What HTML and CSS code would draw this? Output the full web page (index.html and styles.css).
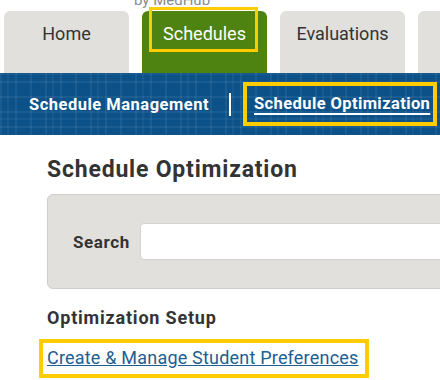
FILE: index.html
```html
<!DOCTYPE html>
<html lang="en">
<head>
    <meta charset="UTF-8">
    <meta name="viewport" content="width=device-width, initial-scale=1.0">
    <title>Schedule Optimization</title>
    <link rel="stylesheet" href="styles.css">
</head>
<body>

<div class="brand"><span class="brand-text">by MedHub</span></div>

<div class="tabs">
    <div class="tab">Home</div>
    <div class="tab tab-active"><span class="highlight">Schedules</span></div>
    <div class="tab">Evaluations</div>
    <div class="tab"></div>
</div>

<div class="subnav">
    <a class="subnav-link" href="#">Schedule Management</a>
    <span class="subnav-sep"></span>
    <span class="subnav-box"><a class="subnav-link subnav-current" href="#">Schedule Optimization</a></span>
</div>

<div class="content">
    <h1 class="page-title">Schedule Optimization</h1>

    <div class="search-panel">
        <label for="search" class="search-label">Search</label>
        <input type="text" id="search" class="search-input">
    </div>

    <h2 class="section-title">Optimization Setup</h2>

    <span class="link-box"><a class="setup-link" href="#">Create &amp; Manage Student Preferences</a></span>
</div>

</body>
</html>
```

FILE: styles.css
```css
body {
    margin: 0;
    padding: 0;
    font-family: Roboto, "Liberation Sans", Arial, sans-serif;
    background-color: #ffffff;
    color: #333333;
    overflow: hidden;
}

.brand {
    height: 11px;
    overflow: hidden;
    padding-left: 134px;
    font-size: 15px;
    line-height: 12px;
    color: #8a8a8a;
}

.brand-text {
    display: block;
    margin-top: -6px;
}

.tabs {
    display: flex;
    gap: 13px;
    padding-left: 4px;
    height: 62px;
}

.tab {
    flex: 0 0 125px;
    background-color: #e1e0dd;
    border-radius: 6px 6px 0 0;
    text-align: center;
    font-size: 18px;
    line-height: 24px;
    padding-top: 11px;
    color: #333333;
}

.tab-active {
    background-color: #4e8312;
    color: #ffffff;
}

.highlight {
    display: inline-block;
    padding: 12px 9px 3px 11px;
    margin: -12px -9px -3px -11px;
    outline: 3px solid #ffcc00;
}

/* blue sub navigation with square pattern */
.subnav {
    height: 62px;
    background-color: #0c5289;
    background-image:
        linear-gradient(rgba(255, 255, 255, 0.06) 2px, transparent 2px),
        linear-gradient(90deg, rgba(255, 255, 255, 0.06) 2px, transparent 2px),
        linear-gradient(rgba(255, 255, 255, 0.04) 2px, transparent 2px),
        linear-gradient(90deg, rgba(255, 255, 255, 0.04) 2px, transparent 2px);
    background-size: 15px 15px, 15px 15px, 45px 45px, 45px 45px;
    background-position: 0 8px, 0 8px, 7px 0, 7px 0;
    display: flex;
    align-items: center;
    padding-left: 29px;
    white-space: nowrap;
}

.subnav-link {
    flex-shrink: 0;
    color: #ffffff;
    font-weight: bold;
    font-size: 16.5px;
    letter-spacing: 0.5px;
    text-decoration: none;
}

.subnav-sep {
    flex-shrink: 0;
    width: 2px;
    height: 23px;
    background-color: #ffffff;
    margin: 0 12px 0 20px;
}

.subnav-box {
    flex-shrink: 0;
    border: 4px solid #ffcc00;
    padding: 8px 3px 9px 7px;
}

.subnav-current {
    letter-spacing: 0.4px;
    text-decoration: underline;
    text-decoration-thickness: 2px;
    text-underline-offset: 4px;
}

.content {
    padding-left: 47px;
}

.page-title {
    font-size: 23px;
    letter-spacing: 0.8px;
    font-weight: bold;
    margin: 21px 0 11px 0;
    color: #333333;
}

.search-panel {
    width: 500px;
    height: 93px;
    background-color: #e1e0dd;
    border: 1px solid #cfcdc9;
    border-radius: 6px;
    display: flex;
    align-items: center;
    padding-left: 25px;
}

.search-label {
    font-size: 17px;
    letter-spacing: 0.6px;
    font-weight: bold;
    margin-right: 10px;
}

.search-input {
    width: 400px;
    height: 35px;
    border: 1px solid #d4d2ce;
    border-radius: 4px;
    background-color: #ffffff;
    padding: 0;
}

.section-title {
    font-size: 18px;
    letter-spacing: 0.8px;
    font-weight: bold;
    margin: 18px 0 11px 0;
    color: #333333;
}

.link-box {
    display: inline-block;
    border: 4px solid #ffcc00;
    padding: 4px 6px 6px 4px;
    margin-left: -8px;
}

.setup-link {
    color: #1d5e93;
    font-size: 18px;
    letter-spacing: 0.2px;
}
```
